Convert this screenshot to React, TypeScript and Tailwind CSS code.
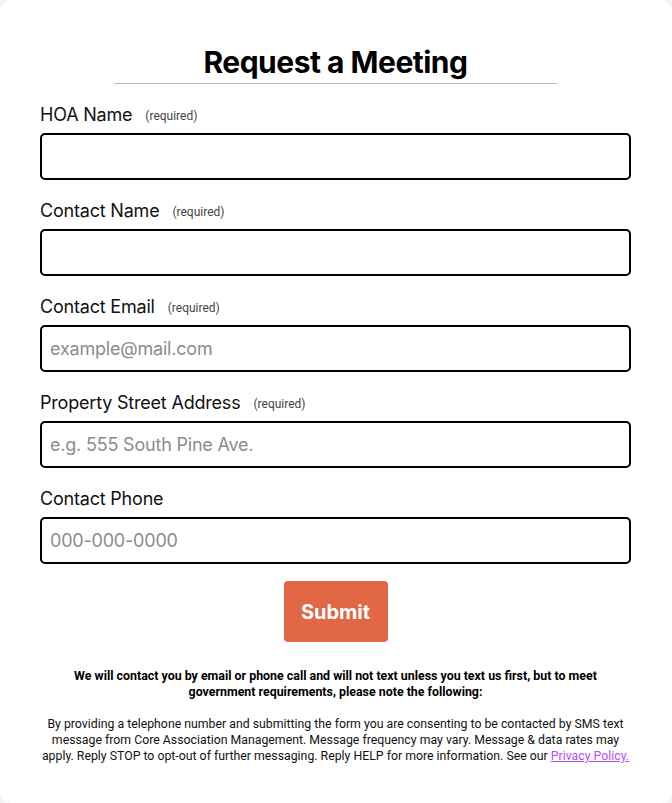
import React from "react";

const font = { fontFamily: "Inter, 'Liberation Sans', sans-serif" };
const small = { fontFamily: "Roboto, 'Liberation Sans', sans-serif" };

function Field({ label, required, placeholder }: { label: string; required?: boolean; placeholder?: string }) {
  return (
    <div className="mb-[19px]">
      <div className="flex items-center h-[24px] mb-[6px]">
        <span className="text-[18px] leading-[24px] text-[#111] tracking-[-0.2px]">{label}</span>
        {required && (
          <span className="ml-[13px] text-[12px] text-[#444] mt-[2px]" style={small}>
            (required)
          </span>
        )}
      </div>
      <input
        className="block w-full h-[47px] border-2 border-black rounded-[5px] px-[8px] text-[18px] tracking-[-0.2px] text-black placeholder:text-[#8c8c8c] outline-none bg-white"
        placeholder={placeholder}
      />
    </div>
  );
}

export default function App() {
  return (
    <div className="min-h-[803px] bg-[#f4f4f4]" style={font}>
      <div className="bg-white rounded-[12px] h-[803px] px-[40px] pr-[41px] pt-[44px]">
        <h1 className="text-center text-[30px] leading-[36px] font-bold text-black tracking-[-0.5px]">Request a Meeting</h1>
        <div className="mx-auto w-[443px] h-px bg-[#b8bcc2] mt-[3px] mb-[19px]" />
        <Field label="HOA Name" required />
        <Field label="Contact Name" required />
        <Field label="Contact Email" required placeholder="example@mail.com" />
        <Field label="Property Street Address" required placeholder="e.g. 555 South Pine Ave." />
        <Field label="Contact Phone" placeholder="000-000-0000" />
        <div className="flex justify-center -mt-[2px]">
          <button className="w-[104px] h-[61px] bg-[#e26745] rounded-[4px] text-white text-[20px] font-bold">Submit</button>
        </div>
        <p className="mt-[26px] text-center text-[12.4px] leading-[16px] font-bold text-black" style={small}>
          <span className="block whitespace-nowrap">
            We will contact you by email or phone call and will not text unless you text us first, but to meet
          </span>
          <span className="block whitespace-nowrap">government requirements, please note the following:</span>
        </p>
        <p className="mt-[16px] text-center text-[12.3px] leading-[16px] text-[#111]" style={small}>
          <span className="block whitespace-nowrap">
            By providing a telephone number and submitting the form you are consenting to be contacted by SMS text
          </span>
          <span className="block whitespace-nowrap">
            message from Core Association Management. Message frequency may vary. Message &amp; data rates may
          </span>
          <span className="block whitespace-nowrap">
            apply. Reply STOP to opt-out of further messaging. Reply HELP for more information. See our{" "}
            <a className="text-[#b44dff] underline" href="#">
              Privacy Policy.
            </a>
          </span>
        </p>
      </div>
    </div>
  );
}
